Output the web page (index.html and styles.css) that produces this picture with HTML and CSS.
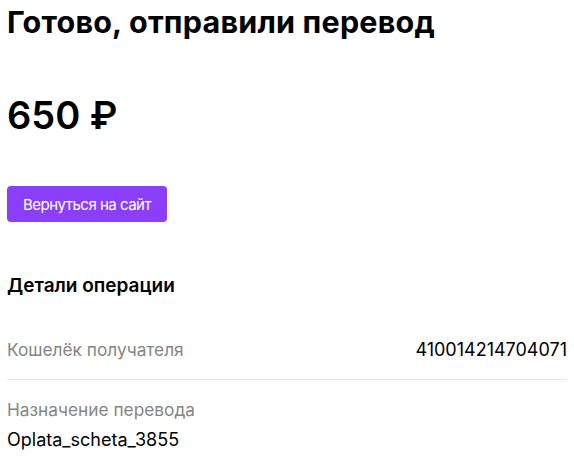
FILE: index.html
```html
<!DOCTYPE html>
<html lang="ru">
<head>
    <meta charset="UTF-8">
    <meta name="viewport" content="width=device-width, initial-scale=1.0">
    <title>Перевод отправлен</title>
    <link rel="stylesheet" href="styles.css">
</head>
<body>
    <div class="page">
        <h1 class="title">Готово, отправили перевод</h1>
        <div class="amount">650 ₽</div>
        <button class="back-btn">Вернуться на сайт</button>

        <h2 class="details-title">Детали операции</h2>
        <div class="detail-row">
            <span class="label">Кошелёк получателя</span>
            <span class="value">410014214704071</span>
        </div>
        <div class="detail-block">
            <div class="label">Назначение перевода</div>
            <div class="value">Oplata_scheta_3855</div>
        </div>
    </div>
</body>
</html>
```

FILE: styles.css
```css
body {
    margin: 0;
    font-family: Inter, "Noto Sans", sans-serif;
    color: #000;
    background-color: #fff;
}

.page {
    display: flex;
    flex-direction: column;
    align-items: flex-start;
    padding: 0 7px;
}

.title {
    margin: 2px 0 0;
    font-size: 30.5px;
    line-height: 40px;
    font-weight: 700;
    letter-spacing: 0.2px;
}

.amount {
    margin-top: 49px;
    font-size: 38px;
    line-height: 48px;
    font-weight: 600;
}

.back-btn {
    margin-top: 47px;
    width: 160px;
    height: 36px;
    border: none;
    border-radius: 4px;
    background-color: #8b3ffd;
    color: #fff;
    font-family: inherit;
    font-size: 15px;
    letter-spacing: -0.5px;
    cursor: pointer;
}

.details-title {
    margin: 52px 0 0;
    font-size: 19px;
    line-height: 24px;
    font-weight: 600;
}

.detail-row {
    align-self: stretch;
    display: flex;
    justify-content: space-between;
    align-items: center;
    margin-top: 40px;
    padding-bottom: 17px;
    border-bottom: 1px solid #e6e6e6;
    font-size: 18px;
    line-height: 24px;
}

.detail-block {
    margin-top: 18px;
    font-size: 18px;
    line-height: 24px;
}

.detail-block .value {
    margin-top: 6px;
}

.label {
    color: #858585;
    font-size: 17.3px;
}

.value {
    color: #000;
}
```
